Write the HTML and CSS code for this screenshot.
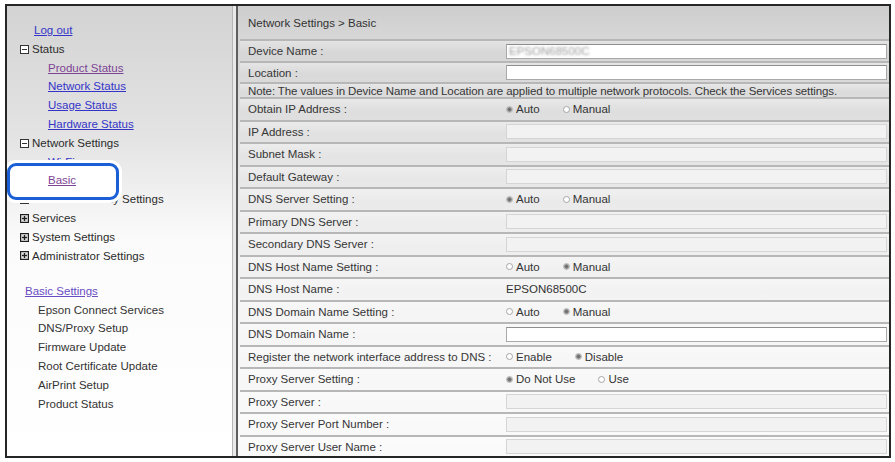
FILE: index.html
```html
<!DOCTYPE html>
<html lang="en">
<head>
    <meta charset="UTF-8">
    <title>Network Settings &gt; Basic</title>
    <link rel="stylesheet" href="styles.css">
</head>
<body>
    <div class="frame">

        <!-- left menu -->
        <div class="sidebar">
            <a class="link logout" href="#">Log out</a>
            <ul class="tree">
                <li class="node">
                    <svg class="toggle" viewBox="0 0 9 9"><rect x="0.5" y="0.5" width="8" height="8"/><path d="M2 4.5h5"/></svg>Status
                </li>
                <li class="leaf"><a class="link visited" href="#">Product Status</a></li>
                <li class="leaf"><a class="link" href="#">Network Status</a></li>
                <li class="leaf"><a class="link" href="#">Usage Status</a></li>
                <li class="leaf"><a class="link" href="#">Hardware Status</a></li>
                <li class="node">
                    <svg class="toggle" viewBox="0 0 9 9"><rect x="0.5" y="0.5" width="8" height="8"/><path d="M2 4.5h5"/></svg>Network Settings
                </li>
                <li class="leaf"><a class="link" href="#">Wi-Fi</a></li>
                <li class="leaf current"><a class="link visited" href="#">Basic</a></li>
                <li class="node">
                    <svg class="toggle" viewBox="0 0 9 9"><rect x="0.5" y="0.5" width="8" height="8"/><path d="M2 4.5h5"/><path d="M4.5 2v5"/></svg>Network Security Settings
                </li>
                <li class="node">
                    <svg class="toggle plus" viewBox="0 0 9 9"><rect x="0.5" y="0.5" width="8" height="8"/><path d="M2 4.5h5"/><path d="M4.5 2v5"/></svg>Services
                </li>
                <li class="node">
                    <svg class="toggle plus" viewBox="0 0 9 9"><rect x="0.5" y="0.5" width="8" height="8"/><path d="M2 4.5h5"/><path d="M4.5 2v5"/></svg>System Settings
                </li>
                <li class="node">
                    <svg class="toggle plus" viewBox="0 0 9 9"><rect x="0.5" y="0.5" width="8" height="8"/><path d="M2 4.5h5"/><path d="M4.5 2v5"/></svg>Administrator Settings
                </li>
            </ul>

            <a class="link basic-title" href="#">Basic Settings</a>
            <ul class="basic-list">
                <li>Epson Connect Services</li>
                <li>DNS/Proxy Setup</li>
                <li>Firmware Update</li>
                <li>Root Certificate Update</li>
                <li>AirPrint Setup</li>
                <li>Product Status</li>
            </ul>

            <!-- callout round the current page -->
            <div class="callout"></div>
        </div>

        <!-- settings table -->
        <div class="main">
            <div class="crumb">Network Settings &gt; Basic</div>

            <div class="row row-top">
                <div class="label">Device Name :</div>
                <div class="value"><div class="field"><span class="blur">EPSON68500C</span></div></div>
            </div>
            <div class="row row-loc">
                <div class="label">Location :</div>
                <div class="value"><div class="field"></div></div>
            </div>
            <div class="row row-note">
                <div class="note">Note: The values in Device Name and Location are applied to multiple network protocols. Check the Services settings.</div>
            </div>
            <div class="row">
                <div class="label">Obtain IP Address :</div>
                <div class="value">
                    <span class="opt"><span class="radio on"></span>Auto</span>
                    <span class="opt"><span class="radio"></span>Manual</span>
                </div>
            </div>
            <div class="row">
                <div class="label">IP Address :</div>
                <div class="value"><div class="field off"></div></div>
            </div>
            <div class="row">
                <div class="label">Subnet Mask :</div>
                <div class="value"><div class="field off"></div></div>
            </div>
            <div class="row">
                <div class="label">Default Gateway :</div>
                <div class="value"><div class="field off"></div></div>
            </div>
            <div class="row">
                <div class="label">DNS Server Setting :</div>
                <div class="value">
                    <span class="opt"><span class="radio on"></span>Auto</span>
                    <span class="opt"><span class="radio"></span>Manual</span>
                </div>
            </div>
            <div class="row">
                <div class="label">Primary DNS Server :</div>
                <div class="value"><div class="field off"></div></div>
            </div>
            <div class="row">
                <div class="label">Secondary DNS Server :</div>
                <div class="value"><div class="field off"></div></div>
            </div>
            <div class="row">
                <div class="label">DNS Host Name Setting :</div>
                <div class="value">
                    <span class="opt"><span class="radio"></span>Auto</span>
                    <span class="opt"><span class="radio on"></span>Manual</span>
                </div>
            </div>
            <div class="row">
                <div class="label">DNS Host Name :</div>
                <div class="value">EPSON68500C</div>
            </div>
            <div class="row">
                <div class="label">DNS Domain Name Setting :</div>
                <div class="value">
                    <span class="opt"><span class="radio"></span>Auto</span>
                    <span class="opt"><span class="radio on"></span>Manual</span>
                </div>
            </div>
            <div class="row">
                <div class="label">DNS Domain Name :</div>
                <div class="value"><div class="field"></div></div>
            </div>
            <div class="row">
                <div class="label">Register the network interface address to DNS :</div>
                <div class="value">
                    <span class="opt"><span class="radio"></span>Enable</span>
                    <span class="opt"><span class="radio on"></span>Disable</span>
                </div>
            </div>
            <div class="row">
                <div class="label">Proxy Server Setting :</div>
                <div class="value">
                    <span class="opt"><span class="radio on"></span>Do Not Use</span>
                    <span class="opt"><span class="radio"></span>Use</span>
                </div>
            </div>
            <div class="row">
                <div class="label">Proxy Server :</div>
                <div class="value"><div class="field off"></div></div>
            </div>
            <div class="row">
                <div class="label">Proxy Server Port Number :</div>
                <div class="value"><div class="field off"></div></div>
            </div>
            <div class="row">
                <div class="label">Proxy Server User Name :</div>
                <div class="value"><div class="field off"></div></div>
            </div>
        </div>
    </div>
</body>
</html>
```

FILE: styles.css
```css
/* reset */
* {
    margin: 0;
    padding: 0;
    box-sizing: border-box;
}

body {
    background-color: #fff;
    font-family: "Liberation Sans", Arial, sans-serif;
    font-size: 11.5px;
    color: #333;
}

ul {
    list-style: none;
}

/* outer window */
.frame {
    display: flex;
    width: 886px;
    height: 454px;
    margin: 4px 0 0 5px;
    border: 2px solid #262626;
    background-color: #e9e9e9;
    overflow: hidden;
}

/* left menu */
.sidebar {
    position: relative;
    width: 226px;
    flex-shrink: 0;
    padding-top: 15px;
    border-right: 1px solid #b5b5b5;
    background: linear-gradient(#d3d3d3, #e4e4e4 30%, #fbfbfb 52%, #fff);
    line-height: 18.8px;
    overflow: hidden;
}

.link {
    color: #3434c8;
    text-decoration: underline;
}

.link.visited {
    color: #7d4494;
}

.logout {
    display: block;
    padding-left: 27px;
}

.node {
    display: flex;
    align-items: center;
    padding-left: 13px;
    color: #2c2c2c;
}

.toggle {
    width: 9px;
    height: 9px;
    margin-right: 3px;
    fill: #fff;
    stroke: #333;
    stroke-width: 1;
}

.toggle.plus {
    fill: #dcdcdc;
    stroke: #1e1e1e;
    stroke-width: 1.3;
}

.leaf {
    padding-left: 41px;
}

.current {
    position: relative;
    z-index: 2;
}

.basic-title {
    display: block;
    margin-top: 16.5px;
    padding-left: 18px;
    color: #6a4cc4;
}

.basic-list li {
    padding-left: 31px;
    color: #333;
}

/* blue callout drawn over the menu */
.callout {
    position: absolute;
    left: 0;
    top: 157px;
    width: 112px;
    height: 37px;
    border: 3.5px solid #1a5fd6;
    border-radius: 9px;
    background-color: #fff;
    box-shadow: 0 0 0 3px #fff;
    z-index: 1;
}

/* settings table */
.main {
    flex: 1;
    margin-left: 3px;
    border-left: 2px solid #5e5e5e;
    background: linear-gradient(#d0d0d0, #dcdcdc 20%, #ebebeb 45%, #f5f5f5 70%, #fafafa);
    overflow: hidden;
}

.crumb {
    height: 33px;
    display: flex;
    align-items: center;
    padding-left: 10px;
    background: linear-gradient(#cdcdcd, #d7d7d7);
    color: #333;
}

.row {
    display: flex;
    align-items: center;
    height: 22.5px;
    margin-left: 2px;
    border-top: 2px solid #b7b7b7;
    background: linear-gradient(rgba(255, 255, 255, 0.35), rgba(255, 255, 255, 0) 60%);
}

.row-top {
    height: 22px;
}

.row-loc {
    height: 21px;
}

.row-note {
    height: 15px;
}

.label {
    width: 266px;
    flex-shrink: 0;
    padding-left: 8px;
    white-space: nowrap;
    color: #363636;
}

.note {
    padding-left: 8px;
    white-space: nowrap;
    letter-spacing: -0.1px;
    color: #363636;
}

.value {
    display: flex;
    align-items: center;
    flex: 1;
    white-space: nowrap;
}

.field {
    width: 381px;
    height: 15px;
    border: 1px solid #a9a9a9;
    border-top-color: #8f8f8f;
    background-color: #fff;
    padding-left: 2px;
    line-height: 13px;
}

.field.off {
    border-color: #d5d5d5;
    background-color: #f2f2f2;
}

/* device name is blurred in the capture */
.blur {
    color: transparent;
    text-shadow: 0 0 2.5px rgba(90, 90, 90, 0.6);
}

/* radio buttons */
.opt {
    display: inline-flex;
    align-items: center;
    margin-right: 23px;
}

.radio {
    width: 7px;
    height: 7px;
    margin-right: 3px;
    border: 1px solid #a5a5a5;
    border-radius: 50%;
    background-color: #fff;
}

.radio.on {
    border-color: #b5b5b5;
    background: radial-gradient(circle, #6d6d6d 0, #7a7a7a 1.8px, #d0d0d0 2.6px);
}
```
